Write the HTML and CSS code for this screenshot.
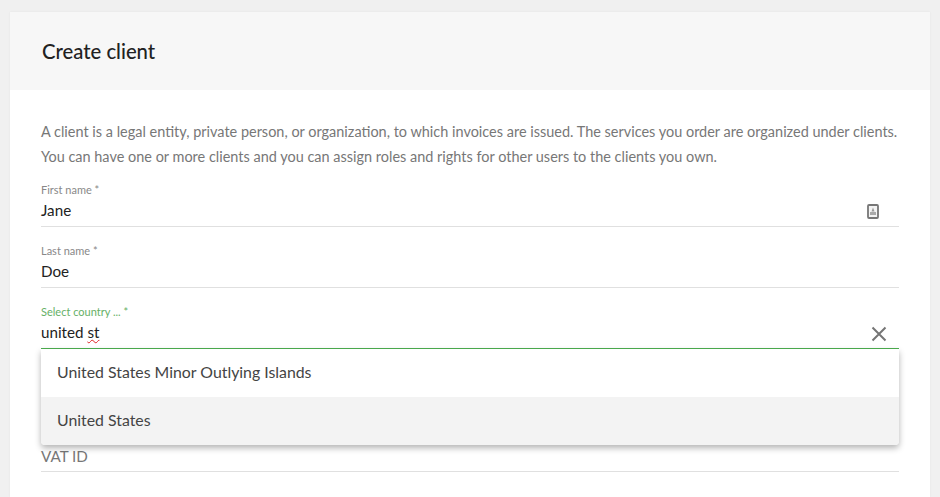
FILE: index.html
```html
<!DOCTYPE html>
<html lang="en">
<head>
    <meta charset="UTF-8">
    <title>Create client</title>
    <link rel="stylesheet" href="styles.css">
</head>
<body>
    <div class="card">
        <div class="head">Create client</div>
        <div class="body">
            <p class="intro">A client is a legal entity, private person, or organization, to which invoices are issued. The services you order are organized under clients.<br>You can have one or more clients and you can assign roles and rights for other users to the clients you own.</p>
            <div class="field">
                <div class="lab">First name *</div>
                <div class="val">Jane</div>
                <svg class="card-ico" width="12" height="15" viewBox="0 0 12 15">
                    <rect x="1" y="1" width="10" height="13" rx="1" fill="#f4f4f4" stroke="#777" stroke-width="1.8"/>
                    <path d="M6 3.5L7.5 7.5H4.5Z" fill="#999"/>
                    <rect x="3" y="8" width="6" height="3" fill="#aaa"/>
                </svg>
            </div>
            <div class="field">
                <div class="lab">Last name *</div>
                <div class="val">Doe</div>
            </div>
            <div class="field active">
                <div class="lab">Select country ... *</div>
                <div class="val">united <span class="typo">st</span></div>
                <svg class="clear" width="16" height="16" viewBox="0 0 16 16">
                    <path d="M1.5 1.5L14.5 14.5M14.5 1.5L1.5 14.5" stroke="#757575" stroke-width="2" fill="none"/>
                </svg>
                <div class="menu">
                    <div class="opt">United States Minor Outlying Islands</div>
                    <div class="opt sel">United States</div>
                </div>
            </div>
            <div class="field tall"></div>
            <div class="field">
                <div class="lab"></div>
                <div class="val ph">VAT ID</div>
            </div>
        </div>
    </div>
</body>
</html>
```

FILE: styles.css
```css
*{
    margin:0;
    padding:0;
    box-sizing:border-box;
}
html,body{
    height:497px;
    overflow:hidden;
}
body{
    background:#f0f0f0;
    padding:12px 10px 0;
    font-family:"Lato","Open Sans",sans-serif;
    color:#222;
}
.card{
    background:#fff;
    height:485px;
    box-shadow:0 0 2px rgba(0,0,0,.06);
}
.head{
    height:78px;
    background:#f7f7f7;
    padding:0 32px;
    line-height:78px;
    font-size:20.3px;
    font-weight:500;
    color:#222;
}
.body{
    padding:30px 31px 0;
}
.intro{
    font-size:14.47px;
    line-height:24.5px;
    color:#777;
    white-space:nowrap;
    margin-bottom:14px;
}
.field{
    position:relative;
    height:44px;
    margin-bottom:17px;
    border-bottom:1px solid #e0e0e0;
}
.tall{
    height:45px;
}
.lab{
    font-size:11px;
    line-height:14px;
    height:14px;
    margin-bottom:1px;
    color:#888;
}
.val{
    font-size:15.2px;
    line-height:24px;
    height:24px;
    color:#222;
}
.card-ico{
    position:absolute;
    right:20px;
    top:21px;
}
.clear{
    position:absolute;
    right:12px;
    top:21px;
}
.active{
    border-bottom-color:#4caf50;
}
.active .lab{
    color:#66b066;
}
.typo{
    text-decoration:underline wavy #d22;
    text-decoration-thickness:1px;
}
.menu{
    position:absolute;
    left:0;
    right:0;
    top:44px;
    background:#fff;
    border-radius:0 0 4px 4px;
    box-shadow:0 3px 6px rgba(0,0,0,.3);
    z-index:2;
}
.opt{
    height:48px;
    line-height:46px;
    padding:0 16px;
    font-size:15.85px;
    color:#444;
}
.sel{
    background:#f3f3f3;
    border-radius:0 0 4px 4px;
}
.ph{
    color:#777;
    padding-top:1px;
}
```
